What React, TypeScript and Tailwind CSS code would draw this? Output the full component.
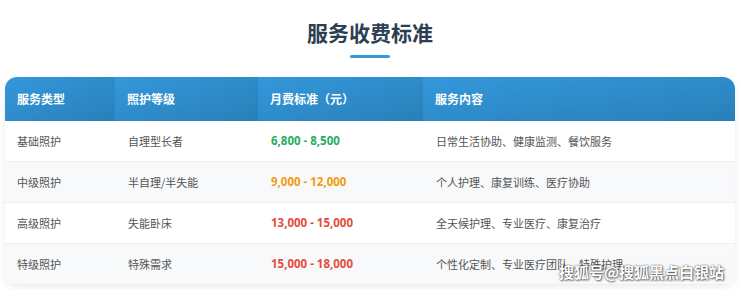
const rows = [
  { type: "基础照护", level: "自理型长者", price: "6,800 - 8,500", color: "text-[#27ae60]", content: "日常生活协助、健康监测、餐饮服务" },
  { type: "中级照护", level: "半自理/半失能", price: "9,000 - 12,000", color: "text-[#f39c12]", content: "个人护理、康复训练、医疗协助" },
  { type: "高级照护", level: "失能卧床", price: "13,000 - 15,000", color: "text-[#e74c3c]", content: "全天候护理、专业医疗、康复治疗" },
  { type: "特级照护", level: "特殊需求", price: "15,000 - 18,000", color: "text-[#e74c3c]", content: "个性化定制、专业医疗团队、特殊护理" },
];

const heads = [
  { label: "服务类型", w: "w-[110px]" },
  { label: "照护等级", w: "w-[143px]" },
  { label: "月费标准（元）", w: "w-[165px]" },
  { label: "服务内容", w: "flex-1" },
];

export default function App() {
  return (
    <div
      className="relative h-[290px] w-[740px] overflow-hidden bg-white"
      style={{ fontFamily: '"Noto Sans CJK SC", "Noto Sans", sans-serif' }}
    >
      <div className="flex flex-col items-center pt-[17px]">
        <h1 className="text-[21px] font-bold leading-[30px] text-[#2c3e50]">服务收费标准</h1>
        <div className="mt-[8px] h-[3px] w-[40px] rounded-full bg-[#3498db]" />
      </div>

      <div className="mx-[5px] mt-[19px] overflow-hidden rounded-[12px] bg-white shadow-[0_2px_8px_rgba(0,0,0,0.08)]">
        <div className="flex h-[44px]">
          {heads.map((h) => (
            <div
              key={h.label}
              className={`${h.w} flex items-center bg-gradient-to-br from-[#3498db] to-[#2980b9] pl-[12px] text-[12px] font-bold text-white`}
            >
              {h.label}
            </div>
          ))}
        </div>
        {rows.map((r, i) => (
          <div
            key={r.type}
            className={`flex h-[41px] items-center border-b border-[#eeeeee] text-[11px] text-[#555] ${
              i % 2 === 1 ? "bg-[#f8f9fa]" : "bg-white"
            }`}
          >
            <div className="w-[110px] pl-[12px]">{r.type}</div>
            <div className="w-[143px] pl-[13px]">{r.level}</div>
            <div
              className={`w-[165px] pl-[13px] text-[11.5px] font-bold ${r.color}`}
              style={{ fontFamily: '"Open Sans", "Noto Sans CJK SC", sans-serif' }}
            >
              {r.price}
            </div>
            <div className="flex-1 pl-[13px]">{r.content}</div>
          </div>
        ))}
      </div>

      <div className="absolute bottom-[7px] right-[16px] text-[15px] font-bold text-white [text-shadow:0_0_2px_rgba(0,0,0,0.7),1px_1px_2px_rgba(0,0,0,0.5)]">
        搜狐号@搜狐黑点白银站
      </div>
    </div>
  );
}
